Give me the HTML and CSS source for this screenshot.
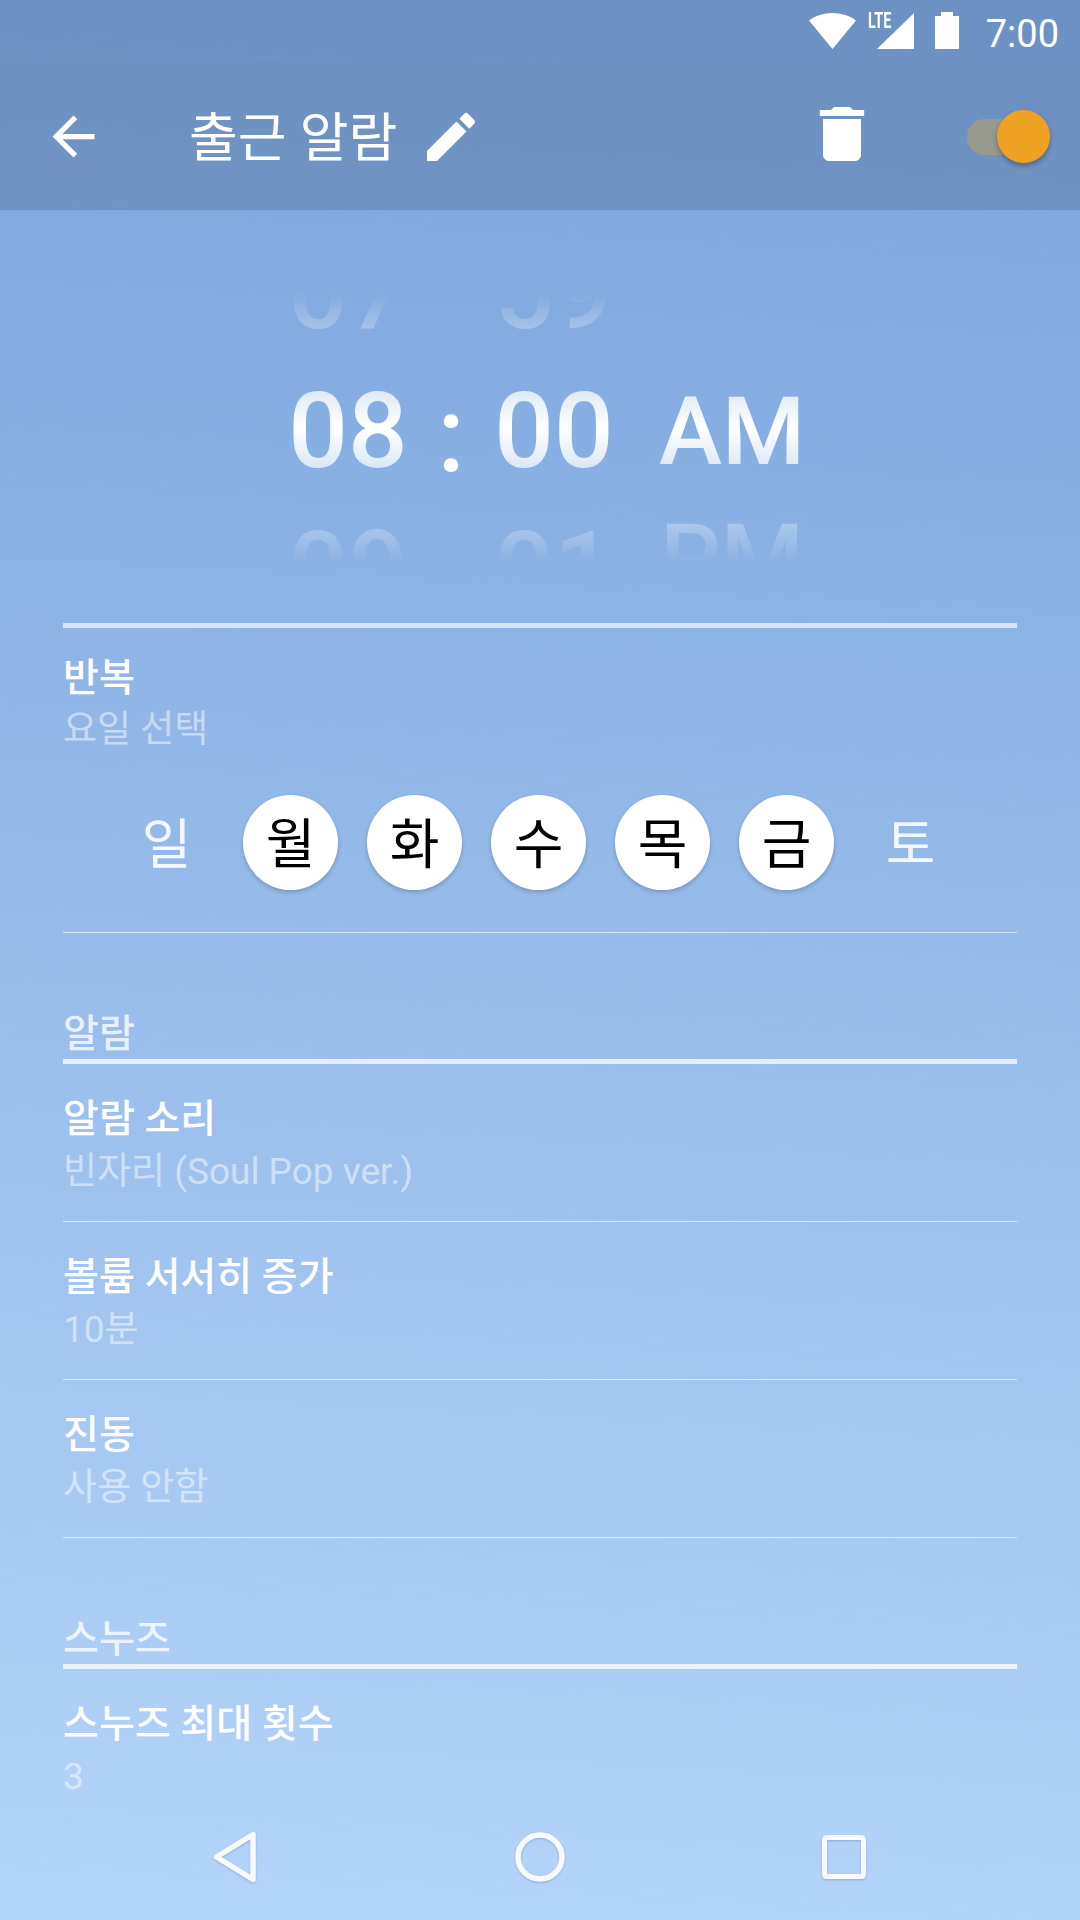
FILE: index.html
```html
<!DOCTYPE html>
<html lang="ko">
<head>
    <meta charset="UTF-8">
    <meta name="viewport" content="width=device-width, initial-scale=1.0">
    <title>출근 알람</title>
    <link rel="stylesheet" href="styles.css">
</head>
<body>
    <div class="screen">
        <div class="status-bar">
            <svg class="ic-wifi" width="47" height="36" viewBox="0 0 47 36"><path d="M0 7.500C6.500 2.800 14.500 0 23.500 0S40.500 2.800 47 7.500L23.500 36z" fill="#fff"/></svg>
            <div class="signal">
                <span class="lte">LTE</span>
                <svg width="37" height="36" viewBox="0 0 37 36"><path d="M0 36L37 0v36z" fill="#fff"/></svg>
            </div>
            <svg class="ic-battery" width="24" height="37" viewBox="0 0 24 37"><path d="M6 0h12v4h6v33H0V4h6z" fill="#fff"/></svg>
            <span class="clock">7:00</span>
        </div>

        <div class="app-bar">
            <svg class="ic-back" width="63" height="63" viewBox="0 0 24 24"><path d="M20 11H7.830l5.590-5.590L12 4l-8 8 8 8 1.410-1.410L7.830 13H20v-2z" fill="#fff"/></svg>
            <h1 class="title">출근 알람</h1>
            <svg class="ic-edit" width="64" height="64" viewBox="0 0 24 24"><path d="M3 17.250V21h3.750L17.810 9.940l-3.750-3.750L3 17.250zM20.710 7.040a1 1 0 0 0 0-1.410l-2.340-2.340a1 1 0 0 0-1.410 0l-1.830 1.830 3.750 3.750 1.830-1.830z" fill="#fff"/></svg>
            <svg class="ic-delete" width="76" height="72" viewBox="0 0 24 24" preserveAspectRatio="none"><path d="M6 19c0 1.100.9 2 2 2h8c1.100 0 2-.9 2-2V7H6v12zM19 4h-3.500l-1-1h-5l-1 1H5v2h14V4z" fill="#fff"/></svg>
            <div class="toggle">
                <div class="toggle-track"></div>
                <div class="toggle-thumb"></div>
            </div>
        </div>

        <div class="content">
            <div class="picker">
                <div class="wheel wheel-num">
                    <span>07</span>
                    <span>08</span>
                    <span>09</span>
                </div>
                <div class="colon">:</div>
                <div class="wheel wheel-num">
                    <span>59</span>
                    <span>00</span>
                    <span>01</span>
                </div>
                <div class="wheel wheel-ampm">
                    <span></span>
                    <span>AM</span>
                    <span>PM</span>
                </div>
            </div>

            <div class="section section-first">
                <div class="row row-days">
                    <div class="row-title">반복</div>
                    <div class="row-sub">요일 선택</div>
                    <div class="days">
                        <div class="day">일</div>
                        <div class="day on">월</div>
                        <div class="day on">화</div>
                        <div class="day on">수</div>
                        <div class="day on">목</div>
                        <div class="day on">금</div>
                        <div class="day">토</div>
                    </div>
                </div>
            </div>

            <div class="section">
                <div class="section-title">알람</div>
                <div class="row">
                    <div class="row-title">알람 소리</div>
                    <div class="row-sub">빈자리 (Soul Pop ver.)</div>
                </div>
                <div class="row">
                    <div class="row-title">볼륨 서서히 증가</div>
                    <div class="row-sub">10분</div>
                </div>
                <div class="row">
                    <div class="row-title">진동</div>
                    <div class="row-sub">사용 안함</div>
                </div>
            </div>

            <div class="section">
                <div class="section-title">스누즈</div>
                <div class="row">
                    <div class="row-title">스누즈 최대 횟수</div>
                    <div class="row-sub">3</div>
                </div>
            </div>
        </div>

        <div class="nav-bar">
            <svg width="44" height="52" viewBox="0 0 44 52"><path d="M3.500 26L40 3.500v45z" fill="none" stroke="#fff" stroke-width="5.500" stroke-linejoin="round"/></svg>
            <svg width="50" height="50" viewBox="0 0 50 50"><circle cx="25" cy="25" r="22" fill="none" stroke="#fff" stroke-width="5.500"/></svg>
            <svg width="44" height="44" viewBox="0 0 44 44"><rect x="2.500" y="2.500" width="39" height="39" rx="2" fill="none" stroke="#fff" stroke-width="5"/></svg>
        </div>
    </div>
</body>
</html>
```
FILE: styles.css
```css
* {
    box-sizing: border-box;
}
html, body {
    margin: 0;
    padding: 0;
}
body {
    font-family: Roboto, "Noto Sans CJK KR", sans-serif;
    color: #fff;
}
.screen {
    position: relative;
    width: 1080px;
    height: 1920px;
    overflow: hidden;
    background: linear-gradient(183deg, #79a3db 0%, #b4d5fa 100%);
}

/* status bar */
.status-bar {
    height: 63px;
    padding: 13px 21px 0 0;
    display: flex;
    justify-content: flex-end;
    align-items: flex-start;
    background: rgba(0, 0, 0, 0.11);
}
.signal {
    position: relative;
    width: 46px;
    height: 36px;
    margin-left: 12px;
    display: flex;
    justify-content: flex-end;
}
.lte {
    position: absolute;
    left: 0;
    top: -3px;
    font-size: 22px;
    line-height: 22px;
    font-weight: 700;
    transform: scaleX(0.66);
    transform-origin: left top;
}
.ic-battery {
    margin: -1px 0 0 21px;
}
.clock {
    margin: -2px 0 0 27px;
    font-size: 38px;
    line-height: 46px;
}

/* app bar */
.app-bar {
    height: 147px;
    padding-left: 42px;
    display: flex;
    align-items: center;
    background: rgba(0, 0, 0, 0.125);
}
.title {
    margin: -6px 0 0 84px;
    font-size: 53px;
    font-weight: 400;
}
.ic-edit {
    margin-left: 22px;
}
.ic-delete {
    margin: -6px 0 0 auto;
}
.toggle {
    position: relative;
    width: 83px;
    height: 53px;
    margin: 0 30px 0 87px;
}
.toggle-track {
    position: absolute;
    left: 0;
    top: 9px;
    width: 70px;
    height: 36px;
    border-radius: 18px;
    background: #989a90;
}
.toggle-thumb {
    position: absolute;
    left: 30px;
    top: 0;
    width: 53px;
    height: 53px;
    border-radius: 50%;
    background: #eea122;
    box-shadow: 0 3px 5px rgba(0, 0, 0, 0.3);
}

/* time wheels */
.content {
    padding: 0 63px;
}
.picker {
    height: 271px;
    margin-top: 82px;
    padding-left: 221px;
    display: flex;
}
.wheel {
    height: 271px;
    padding-top: 8px;
    display: flex;
    flex-direction: column;
    justify-content: center;
    align-items: center;
    overflow: hidden;
    font-weight: 500;
    -webkit-mask-image: linear-gradient(to bottom, transparent 0%, #000 50%, transparent 100%);
    mask-image: linear-gradient(to bottom, transparent 0%, #000 50%, transparent 100%);
}
.wheel span {
    display: block;
    flex: none;
}
.wheel-num {
    width: 128px;
    font-size: 105px;
}
.wheel-num span {
    height: 139px;
    line-height: 139px;
}
.wheel-ampm {
    width: 228px;
    font-size: 95px;
}
.wheel-ampm span {
    height: 127px;
    line-height: 127px;
}
.colon {
    width: 78px;
    padding-top: 8px;
    text-align: center;
    font-size: 105px;
    font-weight: 500;
    line-height: 271px;
}

/* settings list */
.section {
    margin-top: 66px;
}
.section-first {
    margin-top: 60px;
    border-top: 5px solid rgba(255, 255, 255, 0.65);
}
.section-title {
    height: 65px;
    padding-top: 11px;
    border-bottom: 5px solid rgba(255, 255, 255, 0.75);
    font-size: 39px;
    line-height: 48px;
    font-weight: 500;
    color: rgba(255, 255, 255, 0.8);
}
.row {
    height: 158px;
    padding-top: 29px;
    border-bottom: 1px solid rgba(255, 255, 255, 0.6);
}
.row-days {
    height: 305px;
    padding-top: 24px;
}
.section:last-child .row {
    border-bottom: none;
}
.row-title {
    font-size: 39px;
    line-height: 53px;
    font-weight: 500;
}
.row-days .row-title {
    line-height: 52px;
}
.row-sub {
    font-size: 37px;
    line-height: 52px;
    color: rgba(255, 255, 255, 0.5);
}
.days {
    margin-top: 39px;
    padding-right: 3px;
    display: flex;
    justify-content: center;
    gap: 29px;
}
.day {
    width: 95px;
    height: 95px;
    padding-top: 3px;
    border-radius: 50%;
    font-size: 54px;
    line-height: 95px;
    text-align: center;
    color: rgba(255, 255, 255, 0.9);
}
.day.on {
    background: #fff;
    color: #000;
    box-shadow: 0 2px 4px rgba(0, 0, 0, 0.2);
}

/* navigation keys, laid over the list */
.nav-bar {
    position: absolute;
    left: 0;
    right: 0;
    bottom: 0;
    height: 144px;
    padding: 18px 214px 0 213px;
    display: flex;
    justify-content: space-between;
    align-items: center;
}
.nav-bar svg {
    opacity: 0.9;
    filter: drop-shadow(0 1px 1px rgba(0, 0, 0, 0.2));
}
```
